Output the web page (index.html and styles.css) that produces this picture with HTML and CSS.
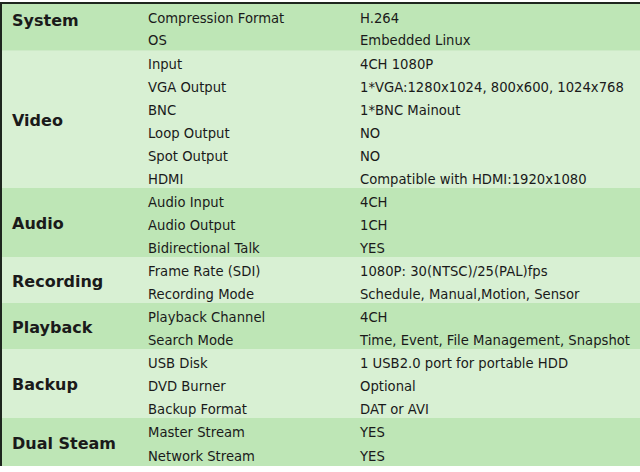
FILE: index.html
```html
<!DOCTYPE html>
<html>
<head>
<meta charset="utf-8">
<link rel="stylesheet" href="styles.css">
</head>
<body>
<div class="frame">
<table class="spec">
<colgroup><col class="c-cat"><col class="c-key"><col class="c-val"></colgroup>
<tbody class="dark">
<tr><th rowspan="2" class="cat cat-top">System</th><td>Compression Format</td><td>H.264</td></tr>
<tr><td>OS</td><td>Embedded Linux</td></tr>
</tbody>
<tbody class="light sep">
<tr><th rowspan="6" class="cat">Video</th><td>Input</td><td>4CH 1080P</td></tr>
<tr><td>VGA Output</td><td>1*VGA:1280x1024, 800x600, 1024x768</td></tr>
<tr><td>BNC</td><td>1*BNC Mainout</td></tr>
<tr><td>Loop Output</td><td>NO</td></tr>
<tr><td>Spot Output</td><td>NO</td></tr>
<tr><td>HDMI</td><td>Compatible with HDMI:1920x1080</td></tr>
</tbody>
<tbody class="dark">
<tr><th rowspan="3" class="cat">Audio</th><td>Audio Input</td><td>4CH</td></tr>
<tr><td>Audio Output</td><td>1CH</td></tr>
<tr><td>Bidirectional Talk</td><td>YES</td></tr>
</tbody>
<tbody class="light">
<tr><th rowspan="2" class="cat">Recording</th><td>Frame Rate (SDI)</td><td>1080P: 30(NTSC)/25(PAL)fps</td></tr>
<tr><td>Recording Mode</td><td>Schedule, Manual,Motion, Sensor</td></tr>
</tbody>
<tbody class="dark">
<tr><th rowspan="2" class="cat">Playback</th><td>Playback Channel</td><td>4CH</td></tr>
<tr><td>Search Mode</td><td>Time, Event, File Management, Snapshot</td></tr>
</tbody>
<tbody class="light">
<tr><th rowspan="3" class="cat">Backup</th><td>USB Disk</td><td>1 USB2.0 port for portable HDD</td></tr>
<tr><td>DVD Burner</td><td>Optional</td></tr>
<tr><td>Backup Format</td><td>DAT or AVI</td></tr>
</tbody>
<tbody class="dark last">
<tr><th rowspan="2" class="cat">Dual Steam</th><td>Master Stream</td><td>YES</td></tr>
<tr><td>Network Stream</td><td>YES</td></tr>
</tbody>
</table>
</div>
</body>
</html>
```
FILE: styles.css
```css
html, body {
  margin: 0;
  padding: 0;
  background: #ffffff;
}
body {
  padding-top: 2px;
  font-family: "DejaVu Sans", Verdana, sans-serif;
  color: #1a1a1a;
}
.frame {
  width: 638px;
  border-top: 2px solid #1e261e;
  border-left: 2px solid #1e261e;
}
.spec {
  width: 638px;
  border-collapse: collapse;
  table-layout: fixed;
  font-size: 13.2px;
}
.c-cat { width: 146px; }
.c-key { width: 212px; }
.c-val { width: 280px; }
.spec td {
  height: 23px;
  padding: 6px 0 0 0;
  box-sizing: border-box;
  white-space: nowrap;
  vertical-align: middle;
  line-height: 16px;
}
.spec .cat {
  text-align: left;
  font-size: 16px;
  font-weight: bold;
  padding: 2px 0 0 10px;
  vertical-align: middle;
  color: #1a1a1a;
}
.spec .cat-top {
  vertical-align: top;
  padding-top: 7px;
}
.dark { background: #bee6b6; }
.light { background: #d8f0d3; }
.sep { border-top: 1px solid #cdeac7; }
.last td { height: 24px; }
```
